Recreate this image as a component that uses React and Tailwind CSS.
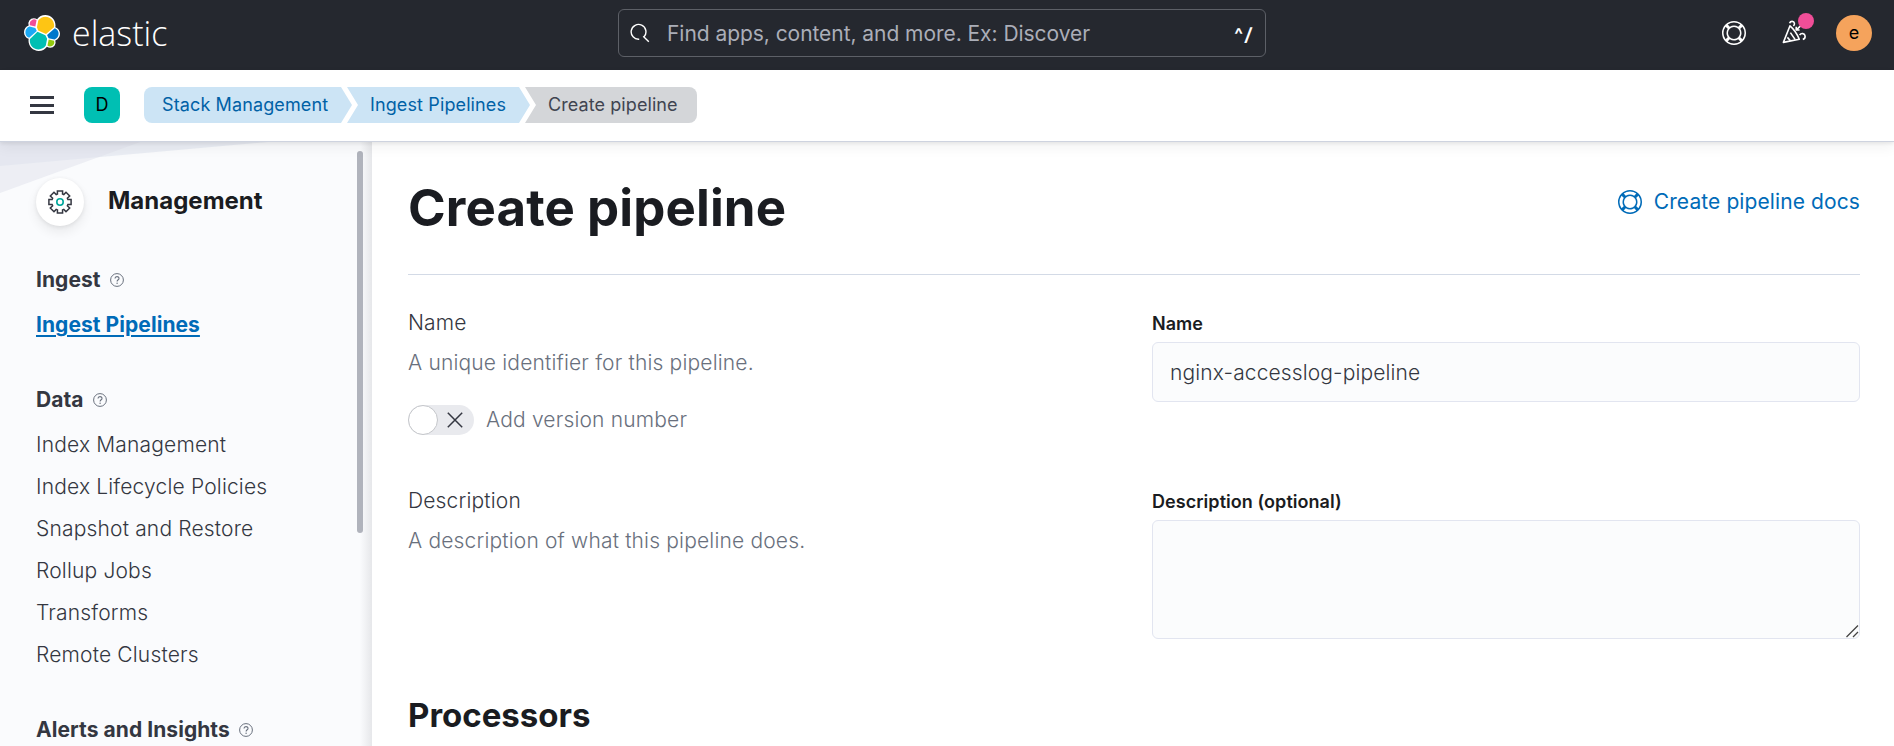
import React from "react";

const HELP_PATH =
  "M13.6 12.186l-1.357-1.358c-.025-.025-.058-.034-.084-.056.53-.794.84-1.746.84-2.773a4.977 4.977 0 00-.84-2.772c.026-.02.059-.03.084-.056L13.6 3.813a6.96 6.96 0 010 8.373zM8 15a6.956 6.956 0 01-4.186-1.4l1.358-1.358c.025-.025.035-.057.055-.082A4.98 4.98 0 008 13c1.028 0 1.98-.31 2.773-.84.02.025.03.057.056.082L12.187 13.6A6.956 6.956 0 018 15zm-5.601-2.813a6.963 6.963 0 010-8.373l1.359 1.358c.024.025.057.035.084.056A4.97 4.97 0 003 8c0 1.027.31 1.98.842 2.773-.027.022-.06.031-.084.056l-1.36 1.358zm5.6-.187A4 4 0 118 4a4 4 0 010 8zM8 1c1.573 0 3.019.525 4.187 1.4l-1.357 1.358c-.025.025-.035.057-.056.084A4.979 4.979 0 008 3a4.979 4.979 0 00-2.773.842c-.021-.027-.03-.059-.056-.084L3.814 2.4A6.957 6.957 0 018 1zm0-1a8.001 8.001 0 10.003 16.002A8.001 8.001 0 008 0z";

function HelpIcon({ className }) {
  return (
    <svg viewBox="0 0 16 16" className={className} fill="currentColor" fillRule="evenodd">
      <path d={HELP_PATH} />
    </svg>
  );
}

function ElasticLogo() {
  return (
    <svg viewBox="0 0 32 32" className="size-9">
      <path fill="#FFF" d="M32 16.77c0-2.676-1.66-5.014-4.156-5.93.11-.567.165-1.144.165-1.736C28.009 4.11 23.944.049 18.95.049c-2.923 0-5.625 1.392-7.334 3.752a4.795 4.795 0 00-2.931-.998A4.818 4.818 0 004.166 9.27C1.693 10.16 0 12.552 0 15.226c0 2.687 1.668 5.035 4.175 5.945a8.6 8.6 0 00-.165 1.733c0 4.975 4.056 9.022 9.041 9.022a9.054 9.054 0 007.331-3.769 4.78 4.78 0 002.933 1.01 4.818 4.818 0 004.518-6.466C30.307 21.835 32 19.442 32 16.77" />
      <path fill="#FEC514" d="M12.58 13.787l7.002 3.211 7.066-6.213a7.85 7.85 0 00.152-1.557c0-4.287-3.464-7.774-7.722-7.774A7.72 7.72 0 0012.694 4.85l-1.174 6.144 1.06 2.793z" />
      <path fill="#00BFB3" d="M5.333 21.228a7.946 7.946 0 00-.152 1.577c0 4.305 3.492 7.807 7.784 7.807a7.79 7.79 0 006.431-3.393l1.166-6.116-1.556-2.994-7.03-3.22-6.643 6.34z" />
      <path fill="#F04E98" d="M5.288 9.067l4.8 1.137L11.14 4.7a3.785 3.785 0 00-6.07 3.043c0 .469.073.913.219 1.324z" />
      <path fill="#1BA9F5" d="M4.872 10.214c-2.144.714-3.643 2.781-3.643 5.054a5.31 5.31 0 003.373 4.98l6.735-6.124-1.236-2.659-5.229-1.251z" />
      <path fill="#93C90E" d="M20.871 27.218a3.762 3.762 0 002.28.79 3.785 3.785 0 003.586-5.04l-4.795-1.128-1.07 5.378z" />
      <path fill="#0077CC" d="M21.848 20.563l5.28 1.239c2.143-.712 3.641-2.781 3.641-5.058a5.318 5.318 0 00-3.365-4.977l-6.904 6.087 1.348 2.709z" />
    </svg>
  );
}

function CheerIcon() {
  return (
    <svg viewBox="0 0 24 24" className="size-6" fill="none" stroke="#fff" strokeWidth="1.6" strokeLinejoin="round">
      <path d="M8 5.800 1.400 22.400 17.300 19.200Q14 11 8 5.800Z" />
      <path d="M8.400 12.600 13.200 19.600M5.400 17.400 8.400 20.800" />
      <path d="M7.600 3.200C8.400.7 12 .7 12.400 3.200 12.600 4.400 12.200 5.300 11.400 6" />
      <path d="M13.800 10.400 18.600 5.800M14.200 6.800V10H17.600" />
      <path d="M17.600 15C19.200 12.700 22.800 13.200 23.100 16 23.200 17.600 22.400 19 20.800 19.400" />
    </svg>
  );
}

function gearPath() {
  const points = [];
  for (let i = 0; i < 8; i++) {
    const base = (i * Math.PI) / 4 - Math.PI / 2;
    [[-0.31, 8.3], [-0.23, 11.4], [0.23, 11.4], [0.31, 8.3]].forEach(([da, r]) => {
      points.push(`${(12 + r * Math.cos(base + da)).toFixed(2)} ${(12 + r * Math.sin(base + da)).toFixed(2)}`);
    });
  }
  return `M${points.join("L")}Z`;
}

function GearIcon() {
  return (
    <svg viewBox="0 0 24 24" className="size-6" fill="none">
      <path d={gearPath()} stroke="#343741" strokeWidth="1.5" />
      <circle cx="12" cy="12" r="3.2" stroke="#00a69b" strokeWidth="1.6" />
    </svg>
  );
}

function QuestionIcon() {
  return (
    <svg viewBox="0 0 14 14" className="size-3.5" fill="none" stroke="#69707d" strokeWidth="1">
      <circle cx="7" cy="7" r="6.4" />
      <path d="M5 5.500C5 3 9 3 9 5.400 9 6.800 7.100 6.700 7.100 8.500" strokeWidth="1.1" />
      <circle cx="7.1" cy="10.3" r=".7" fill="#69707d" stroke="none" />
    </svg>
  );
}

function TopBar() {
  return (
    <header className="flex h-[70px] shrink-0 items-start bg-[#25282f] text-white">
      <div className="flex w-[618px] items-start pl-6 pt-[15px]">
        <ElasticLogo />
        <span className="-mt-[6px] ml-[12px] origin-left scale-x-[0.97] font-['Open_Sans'] text-[35px] font-[350] leading-[48px]">
          elastic
        </span>
      </div>
      <div className="mt-[9px] flex h-12 w-[648px] items-center rounded-md border-[1.5px] border-[#5d6067] pl-[11px] pr-[12px]">
        <svg viewBox="0 0 20 20" className="size-5" fill="none" stroke="#fff" strokeWidth="1.4">
          <path d="M9.200 16.200A7.400 7.400 0 1 1 14.200 13.600M13.200 13.200 18.800 18.800" />
        </svg>
        <span className="ml-[17px] pt-px text-[21px] leading-[31px] tracking-[-0.05px] text-[#abaeb8]">
          Find apps, content, and more. Ex: Discover
        </span>
        <span className="ml-auto pt-[3px] text-[18px] font-bold tracking-[1.5px]">
          ^<span className="inline-block -skew-x-6">/</span>
        </span>
      </div>
      <div className="ml-auto flex items-start pr-[22px] pt-[15px]">
        <HelpIcon className="mt-1.5 size-6" />
        <div className="relative ml-9 mt-[5px]">
          <CheerIcon />
          <span className="absolute -top-[7px] left-4 size-4 rounded-full bg-[#f04e98]" />
        </div>
        <span className="ml-[30px] flex size-9 items-center justify-center rounded-full bg-[#f5a35c] text-[18px] leading-9 text-black">
          e
        </span>
      </div>
    </header>
  );
}

function BreadcrumbBar() {
  return (
    <div className="relative z-10 flex h-[72px] shrink-0 items-start border-b border-[#ced3df] bg-white pt-[17px] shadow-[0_2px_3px_rgba(0,0,0,0.06),0_6px_12px_rgba(0,0,0,0.05)]">
      <div className="ml-[30px] mt-[9px] flex w-6 flex-col gap-[4.5px]">
        <span className="h-[3px] bg-[#343741]" />
        <span className="h-[3px] bg-[#343741]" />
        <span className="h-[3px] bg-[#343741]" />
      </div>
      <span className="ml-[30px] flex size-9 items-center justify-center rounded-lg bg-[#00bfb3] text-[18px] leading-9 text-black">
        D
      </span>
      <nav className="ml-6 flex h-9 text-[18px] leading-[35px] tracking-[0.12px]">
        <a className="w-[208px] rounded-l-lg bg-[#cce4f5] pl-[18px] text-[#0061a6] [clip-path:polygon(0_0,197px_0,208px_50%,197px_100%,0_100%)]">
          Stack Management
        </a>
        <a className="-ml-[5px] w-[183px] bg-[#cce4f5] pl-[23px] text-[#0061a6] [clip-path:polygon(0_0,172px_0,183px_50%,172px_100%,0_100%,11px_50%)]">
          Ingest Pipelines
        </a>
        <span className="-ml-[5px] w-[172px] rounded-r-lg bg-[#d4d6d9] pl-[23px] tracking-[0.08px] text-[#404450] [clip-path:polygon(0_0,100%_0,100%_100%,0_100%,11px_50%)]">
          Create pipeline
        </span>
      </nav>
    </div>
  );
}

function NavHeading({ children, className }) {
  return (
    <div className={`flex h-[30px] items-center gap-[9px] ${className}`}>
      <span className="text-[21px] font-bold leading-[30px] tracking-[0.06px] text-[#343741]">{children}</span>
      <QuestionIcon />
    </div>
  );
}

const DATA_ITEMS = [
  "Index Management",
  "Index Lifecycle Policies",
  "Snapshot and Restore",
  "Rollup Jobs",
  "Transforms",
  "Remote Clusters",
];

function Sidebar() {
  return (
    <aside className="relative w-[372px] shrink-0 overflow-hidden bg-[#fafbfd]">
      <svg className="absolute left-0 top-0 h-[60px] w-[280px]" viewBox="0 0 280 60">
        <path d="M0 0H268L0 24Z" fill="#dfe4ee" fillOpacity=".6" />
        <path d="M0 0H140L0 51Z" fill="#dfe2ec" fillOpacity=".5" />
      </svg>
      <div className="absolute right-0 top-0 h-full w-3 bg-linear-to-r from-[#fafbfd] to-[#e6e7ea]" />
      <div className="absolute left-[357px] top-[9px] h-[382px] w-1.5 rounded-full bg-[#b0b3bc]" />
      <div className="relative pl-9 pt-9">
        <div className="flex h-12 items-center">
          <span className="flex size-12 items-center justify-center rounded-full bg-white shadow-[0_1px_4px_rgba(0,0,0,0.08),0_6px_12px_rgba(0,0,0,0.07)]">
            <GearIcon />
          </span>
          <h2 className="-mt-[2px] ml-6 text-[24px] font-bold leading-9 text-[#1a1c21]">Management</h2>
        </div>
        <NavHeading className="mt-[39px]">Ingest</NavHeading>
        <a className="mt-[15px] block text-[21px] font-bold leading-[30px] tracking-[0.06px] text-[#006bb8] underline decoration-2 underline-offset-[3px]">
          Ingest Pipelines
        </a>
        <NavHeading className="mt-[45px]">Data</NavHeading>
        <ul className="mt-[15px] flex flex-col gap-3 text-[21px] font-light leading-[30px] tracking-[0.17px] text-[#343741]">
          {DATA_ITEMS.map((item) => (
            <li key={item}>{item}</li>
          ))}
        </ul>
        <NavHeading className="mt-[45px]">Alerts and Insights</NavHeading>
      </div>
    </aside>
  );
}

function Main() {
  return (
    <main className="min-w-0 flex-1 bg-white pl-9 pr-[34px] pt-9">
      <div className="flex items-start justify-between">
        <h1 className="text-[51px] font-bold leading-[60px] tracking-[0.1px] text-[#1a1c21]">Create pipeline</h1>
        <a className="mt-[9px] flex items-center gap-3 text-[21px] leading-[30px] tracking-[0.1px] text-[#006bb8]">
          <HelpIcon className="size-6" />
          Create pipeline docs
        </a>
      </div>
      <div className="mt-9 h-px bg-[#d3dae6]" />
      <section className="mt-[33px] grid grid-cols-[708px_708px] justify-between text-[21px] font-light leading-[30px] tracking-[0.17px] text-[#69707d]">
        <div className="h-[178px]">
          <h3 className="text-[#343741]">Name</h3>
          <p className="mt-[10px]">A unique identifier for this pipeline.</p>
          <div className="mt-[27px] flex items-center">
            <span className="flex h-[30px] w-[66px] items-center rounded-full bg-[#e9eaee]">
              <span className="size-[30px] rounded-full border border-[#c4c6ca] bg-white" />
              <svg viewBox="0 0 16 16" className="ml-[9px] size-4" stroke="#343741" strokeWidth="1.5">
                <path d="M.8.8 15.200 15.200M15.200.8.8 15.200" />
              </svg>
            </span>
            <span className="ml-3">Add version number</span>
          </div>
        </div>
        <div>
          <label className="mt-[2px] block text-[18px] font-semibold leading-[27px] tracking-normal text-[#1a1c21]">Name</label>
          <div className="mt-[5px] flex h-[60px] items-center rounded-md border border-[#e2e5f0] bg-[#fbfcfd] pl-[17px] pt-[2px] tracking-[0.12px] text-[#343741]">
            nginx-accesslog-pipeline
          </div>
        </div>
        <div className="h-[190px]">
          <h3 className="text-[#343741]">Description</h3>
          <p className="mt-[10px]">A description of what this pipeline does.</p>
        </div>
        <div>
          <label className="mt-[2px] block text-[18px] font-semibold leading-[27px] tracking-[0.05px] text-[#1a1c21]">
            Description (optional)
          </label>
          <div className="mt-[5px] flex h-[119px] items-end justify-end rounded-md border border-[#e2e5f0] bg-[#fbfcfd]">
            <svg viewBox="0 0 14 14" className="size-3.5" stroke="#454545" strokeWidth="1.3">
              <path d="M1.500 13 13 1.500M8 13 13 8" />
            </svg>
          </div>
        </div>
      </section>
      <h2 className="mt-[18px] text-[33px] font-bold leading-[42px] text-[#1a1c21]">Processors</h2>
    </main>
  );
}

export default function App() {
  return (
    <div className="flex h-[746px] w-full flex-col overflow-hidden bg-white font-['Inter',sans-serif]">
      <TopBar />
      <BreadcrumbBar />
      <div className="flex min-h-0 flex-1">
        <Sidebar />
        <Main />
      </div>
    </div>
  );
}
